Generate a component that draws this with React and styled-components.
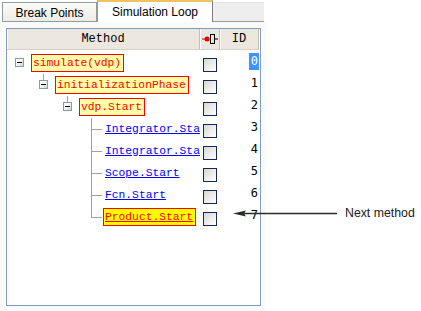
import React from 'react';
import styled, { createGlobalStyle } from 'styled-components';

const GlobalStyle = createGlobalStyle`
  html, body {
    margin: 0;
    padding: 0;
    background: #ffffff;
  }
  body {
    width: 421px;
    height: 311px;
    overflow: hidden;
    font-family: "Liberation Sans", Arial, sans-serif;
  }
`;

const Page = styled.div`
  position: relative;
  width: 421px;
  height: 311px;
`;

const Pane = styled.div`
  display: flex;
  flex-direction: column;
  width: 266px;
  height: 311px;
`;

// Tabs
const TabStrip = styled.div`
  display: flex;
  align-items: flex-end;
  height: 22px;
  padding-left: 2px;
`;

const Tab = styled.div`
  display: flex;
  align-items: center;
  justify-content: center;
  box-sizing: border-box;
  width: ${({ $width }) => $width}px;
  height: ${({ $active }) => ($active ? 22 : 20)}px;
  font-size: 12px;
  color: #000;
  background: ${({ $active }) =>
    $active ? '#ffffff' : 'linear-gradient(#fbfbf9, #ecebe6)'};
  border: 1px solid #919b9c;
  border-right-color: ${({ $active }) => ($active ? '#7d7d7d' : '#919b9c')};
  border-top: ${({ $active }) =>
    $active ? '2px solid #f3c163' : '1px solid #919b9c'};
  border-bottom: ${({ $active }) => ($active ? 'none' : '1px solid #919b9c')};
  padding-top: ${({ $active }) => ($active ? 0 : 1)}px;
`;

const TabFiller = styled.div`
  width: 51px;
  height: 20px;
  box-sizing: border-box;
  background: #eeeeee;
  border-top: 1px solid #e4e4e4;
  border-bottom: 1px solid #9a9a9a;
`;

const Content = styled.div`
  flex: 1;
  display: flex;
  padding: 6px 5px 5px 6px;
  background: #fafafa;
`;

// Table
const Table = styled.div`
  flex: 1;
  display: flex;
  flex-direction: column;
  border: 1px solid #7f9db9;
  background: #ffffff;
`;

const HeaderRow = styled.div`
  display: flex;
  height: 21px;
  width: 252px;
  background: #ebe6de;
  border-bottom: 1px solid #d6d0c5;
  box-sizing: border-box;
`;

const HeaderCell = styled.div`
  display: flex;
  align-items: center;
  justify-content: center;
  width: ${({ $width }) => $width}px;
  box-sizing: border-box;
  border-right: 1px solid #c5bfb2;
  box-shadow: inset 1px 0 0 #ffffff;
  font-family: "Liberation Mono", "Courier New", monospace;
  font-size: 12px;
  color: #000;
`;

const Body = styled.div`
  display: flex;
  flex-direction: column;
  padding-top: 2px;
`;

const Row = styled.div`
  display: flex;
  height: 22px;
`;

const TreeCell = styled.div`
  display: flex;
  align-items: center;
  width: 193px;
  overflow: hidden;
  white-space: nowrap;
`;

const Expander = styled.span`
  position: relative;
  flex: none;
  box-sizing: border-box;
  width: 9px;
  height: 9px;
  margin: 0 7px 1px ${({ $level }) => 8 + $level * 24}px;
  border: 1px solid #7f9db9;
  background: linear-gradient(135deg, #ffffff 30%, #d4d4cc);

  &::after {
    content: '';
    position: absolute;
    left: 1px;
    right: 1px;
    top: 3px;
    height: 1px;
    background: #000;
  }

  &::before {
    content: '';
    display: ${({ $level }) => ($level > 0 ? 'block' : 'none')};
    position: absolute;
    left: 3px;
    top: -9px;
    width: 1px;
    height: 8px;
    background: #a0a0a0;
  }
`;

const Branch = styled.span`
  position: relative;
  flex: none;
  align-self: stretch;
  width: 12px;
  margin-left: 84px;

  &::before {
    content: '';
    position: absolute;
    left: 0;
    top: -2px;
    width: 1px;
    height: ${({ $last }) => ($last ? 14 : 24)}px;
    background: #a0a0a0;
  }

  &::after {
    content: '';
    position: absolute;
    left: 0;
    top: 11px;
    width: 11px;
    height: 1px;
    background: #a0a0a0;
  }
`;

const labelBg = { node: '#ffffa8', current: '#ffff00', link: 'transparent' };

const Label = styled.span`
  flex: none;
  font-family: "Liberation Mono", "Courier New", monospace;
  font-size: 11.3px;
  line-height: 16px;
  padding: 0 2px 0 1px;
  border: 1px solid ${({ $kind }) => ($kind === 'link' ? 'transparent' : '#ff0000')};
  background: ${({ $kind }) => labelBg[$kind]};
  color: ${({ $kind }) => ($kind === 'link' ? '#0000ff' : '#ff0000')};
  text-decoration: ${({ $kind }) => ($kind === 'node' ? 'none' : 'underline')};
`;

const CheckCell = styled.div`
  display: flex;
  align-items: center;
  justify-content: center;
  width: 20px;
`;

const Checkbox = styled.span`
  box-sizing: border-box;
  width: 14px;
  height: 14px;
  margin-top: 4px;
  border: 1px solid #14285a;
  background: linear-gradient(135deg, #d8d8d2, #ffffff);
`;

const IdCell = styled.div`
  display: flex;
  align-items: flex-start;
  justify-content: flex-end;
  width: 39px;
  padding-top: 1px;
  box-sizing: border-box;
`;

const IdText = styled.span`
  font-family: "DejaVu Sans Mono", "Liberation Mono", monospace;
  font-size: 12px;
  line-height: 17px;
  padding: 0 1px 0 2px;
  color: ${({ $selected }) => ($selected ? '#ffffff' : '#000000')};
  background: ${({ $selected }) => ($selected ? '#3d95ff' : 'transparent')};
`;

// Annotation callout
const Callout = styled.div`
  position: absolute;
  left: 232px;
  top: 206px;
  display: flex;
  align-items: center;
  gap: 7px;
`;

const CalloutText = styled.span`
  font-family: "Liberation Sans", Arial, sans-serif;
  font-size: 12.3px;
  color: #1a1a1a;
`;

const BreakpointIcon = () => (
  <svg width="16" height="12" viewBox="0 0 16 12">
    <line x1="0" y1="6" x2="4" y2="6" stroke="#cc0000" strokeWidth="1" />
    <circle cx="5" cy="6" r="2.5" fill="#ee0000" />
    <rect x="8.5" y="1.5" width="4" height="9" fill="none" stroke="#000" strokeWidth="1" />
    <line x1="13" y1="6" x2="16" y2="6" stroke="#000" strokeWidth="1" />
  </svg>
);

const Arrow = () => (
  <svg width="106" height="14" viewBox="0 0 106 14">
    <line x1="10" y1="7.5" x2="105" y2="7.5" stroke="#2a2a2a" strokeWidth="1.5" />
    <polygon points="1,7.5 14,4.5 12,7.5 14,10.5" fill="#2a2a2a" />
  </svg>
);

const rows = [
  { id: 0, level: 0, text: 'simulate(vdp)', kind: 'node', selected: true },
  { id: 1, level: 1, text: 'initializationPhase', kind: 'node' },
  { id: 2, level: 2, text: 'vdp.Start', kind: 'node' },
  { id: 3, level: 3, text: 'Integrator.Start', kind: 'link' },
  { id: 4, level: 3, text: 'Integrator.Start', kind: 'link' },
  { id: 5, level: 3, text: 'Scope.Start', kind: 'link' },
  { id: 6, level: 3, text: 'Fcn.Start', kind: 'link' },
  { id: 7, level: 3, text: 'Product.Start', kind: 'current', last: true },
];

const App = () => {
  return (
    <>
      <GlobalStyle />
      <Page>
        <Pane>
          <TabStrip>
            <Tab $width={95}>Break Points</Tab>
            <Tab $width={116} $active>
              Simulation Loop
            </Tab>
            <TabFiller />
          </TabStrip>
          <Content>
            <Table>
              <HeaderRow>
                <HeaderCell $width={193}>Method</HeaderCell>
                <HeaderCell $width={20}>
                  <BreakpointIcon />
                </HeaderCell>
                <HeaderCell $width={39}>ID</HeaderCell>
              </HeaderRow>
              <Body>
                {rows.map((row) => (
                  <Row key={row.id}>
                    <TreeCell>
                      {row.level < 3 ? (
                        <Expander $level={row.level} />
                      ) : (
                        <Branch $last={row.last} />
                      )}
                      <Label $kind={row.kind}>{row.text}</Label>
                    </TreeCell>
                    <CheckCell>
                      <Checkbox />
                    </CheckCell>
                    <IdCell>
                      <IdText $selected={row.selected}>{row.id}</IdText>
                    </IdCell>
                  </Row>
                ))}
              </Body>
            </Table>
          </Content>
        </Pane>
        <Callout>
          <Arrow />
          <CalloutText>Next method</CalloutText>
        </Callout>
      </Page>
    </>
  );
};

export default App;
